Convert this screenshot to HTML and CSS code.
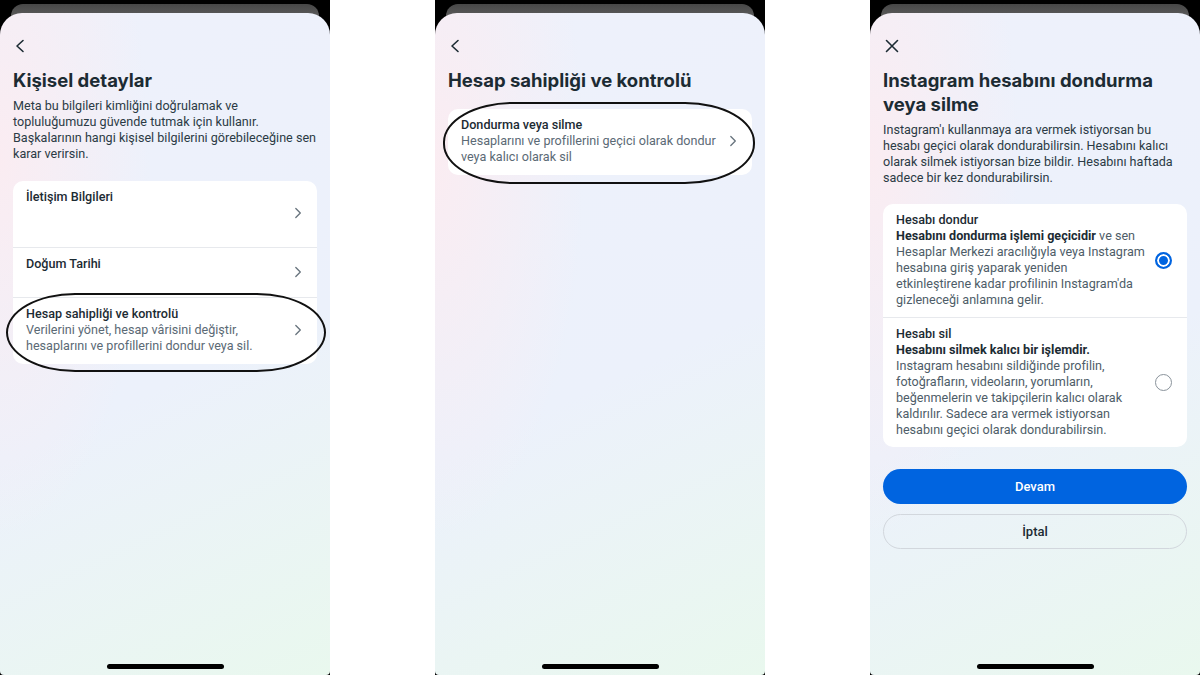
FILE: index.html
```html
<!DOCTYPE html>
<html lang="tr">
<head>
  <meta charset="UTF-8">
  <meta name="viewport" content="width=device-width, initial-scale=1.0">
  <title>Hesap dondurma adımları</title>
  <link rel="stylesheet" href="styles.css">
</head>
<body>

  <main class="strip">

    <section class="phone">
      <div class="peek"></div>
      <div class="sheet">
        <div class="nav">
          <svg class="nav-icon" viewBox="0 0 24 24"><path d="M10 6.5 4 12l6 5.5"/></svg>
        </div>
        <h1 class="title">Kişisel detaylar</h1>
        <p class="lead">Meta bu bilgileri kimliğini doğrulamak ve topluluğumuzu güvende tutmak için kullanır. Başkalarının hangi kişisel bilgilerini görebileceğine sen karar verirsin.</p>
        <div class="card">
          <div class="row row-tall">
            <div class="row-text">
              <div class="row-title">İletişim Bilgileri</div>
            </div>
            <svg class="chev" viewBox="0 0 16 16"><path d="M5.8 3.5 10.3 8l-4.5 4.5"/></svg>
          </div>
          <div class="row row-mid">
            <div class="row-text">
              <div class="row-title">Doğum Tarihi</div>
            </div>
            <svg class="chev" viewBox="0 0 16 16"><path d="M5.8 3.5 10.3 8l-4.5 4.5"/></svg>
          </div>
          <div class="row">
            <div class="row-text">
              <div class="row-title">Hesap sahipliği ve kontrolü</div>
              <div class="row-sub">Verilerini yönet, hesap vârisini değiştir, hesaplarını ve profillerini dondur veya sil.</div>
            </div>
            <svg class="chev" viewBox="0 0 16 16"><path d="M5.8 3.5 10.3 8l-4.5 4.5"/></svg>
            <span class="mark mark-one"></span>
          </div>
        </div>
        <div class="home-bar"></div>
      </div>
    </section>

    <section class="phone">
      <div class="peek"></div>
      <div class="sheet">
        <div class="nav">
          <svg class="nav-icon" viewBox="0 0 24 24"><path d="M10 6.5 4 12l6 5.5"/></svg>
        </div>
        <h1 class="title">Hesap sahipliği ve kontrolü</h1>
        <div class="card card-tight">
          <div class="row">
            <div class="row-text">
              <div class="row-title">Dondurma veya silme</div>
              <div class="row-sub">Hesaplarını ve profillerini geçici olarak dondur veya kalıcı olarak sil</div>
            </div>
            <svg class="chev" viewBox="0 0 16 16"><path d="M5.8 3.5 10.3 8l-4.5 4.5"/></svg>
            <span class="mark mark-two"></span>
          </div>
        </div>
        <div class="home-bar"></div>
      </div>
    </section>

    <section class="phone">
      <div class="peek"></div>
      <div class="sheet">
        <div class="nav">
          <svg class="nav-icon" viewBox="0 0 24 24"><path d="M3.5 6.5l11 11M14.5 6.5l-11 11"/></svg>
        </div>
        <h1 class="title">Instagram hesabını dondurma veya silme</h1>
        <p class="lead">Instagram'ı kullanmaya ara vermek istiyorsan bu hesabı geçici olarak dondurabilirsin. Hesabını kalıcı olarak silmek istiyorsan bize bildir. Hesabını haftada sadece bir kez dondurabilirsin.</p>
        <div class="card card-options">
          <label class="option">
            <div class="option-text">
              <div class="option-title">Hesabı dondur</div>
              <p><b>Hesabını dondurma işlemi geçicidir</b> ve sen Hesaplar Merkezi aracılığıyla veya Instagram hesabına giriş yaparak yeniden etkinleştirene kadar profilinin Instagram'da gizleneceği anlamına gelir.</p>
            </div>
            <span class="radio radio-on"></span>
          </label>
          <label class="option">
            <div class="option-text">
              <div class="option-title">Hesabı sil</div>
              <p><b>Hesabını silmek kalıcı bir işlemdir.</b> Instagram hesabını sildiğinde profilin, fotoğrafların, videoların, yorumların, beğenmelerin ve takipçilerin kalıcı olarak kaldırılır. Sadece ara vermek istiyorsan hesabını geçici olarak dondurabilirsin.</p>
            </div>
            <span class="radio"></span>
          </label>
        </div>
        <a class="btn btn-primary">Devam</a>
        <a class="btn btn-ghost">İptal</a>
        <div class="home-bar"></div>
      </div>
    </section>

  </main>

</body>
</html>
```

FILE: styles.css
```css
* {
  box-sizing: border-box;
}
body {
  margin: 0;
  background: #fff;
  color: #1c2b33;
  font-family: Roboto, "Noto Sans", sans-serif;
}
.strip {
  width: 1200px;
  height: 675px;
  display: flex;
  justify-content: space-between;
}
.phone {
  width: 330px;
  height: 675px;
  padding-top: 4px;
  background: #000;
  display: flex;
  flex-direction: column;
  overflow: hidden;
}
.peek {
  flex: none;
  height: 22px;
  margin: 0 11px;
  border-radius: 12px 12px 0 0;
  background: linear-gradient(#474747, #6b6b6b);
}
.sheet {
  flex: 1;
  margin-top: -13px;
  padding: 21px 13px 0;
  border-radius: 22px 22px 4px 4px;
  background:
    radial-gradient(ellipse 150px 380px at 0 22%, rgba(251, 236, 241, .95), rgba(251, 236, 241, 0)),
    linear-gradient(155deg, #eef1fb 0%, #ecf1fb 55%, #e9f8ee 100%);
  display: flex;
  flex-direction: column;
}
.nav {
  height: 24px;
  display: flex;
  align-items: center;
}
.nav-icon {
  width: 24px;
  height: 24px;
  fill: none;
  stroke: #1c2b33;
  stroke-width: 1.6;
  stroke-linecap: round;
  stroke-linejoin: round;
}
.title {
  margin: 10px 0 0;
  font-family: Inter, "Noto Sans", sans-serif;
  font-size: 18.5px;
  line-height: 24px;
  font-weight: 700;
}
.lead {
  margin: 6px 0 0;
  font-size: 12.6px;
  line-height: 16px;
  color: #2b3b45;
}
.card {
  margin-top: 19px;
  background: #fff;
  border-radius: 10px;
}
.card-tight {
  margin-top: 17px;
}
.row {
  position: relative;
  display: flex;
  align-items: center;
  gap: 8px;
  padding: 8px 11px 10px 13px;
  border-top: 1px solid #e7e9ed;
}
.row:first-child {
  border-top: 0;
}
.row-tall {
  min-height: 66px;
}
.row-mid {
  min-height: 50px;
}
.row-text {
  flex: 1;
  align-self: flex-start;
  font-size: 12.6px;
  line-height: 16px;
}
.row-title {
  font-weight: 500;
}
.row-sub {
  color: #5b6a75;
}
.chev {
  flex: none;
  width: 16px;
  height: 16px;
  fill: none;
  stroke: #67737d;
  stroke-width: 1.3;
  stroke-linecap: round;
  stroke-linejoin: round;
}
.mark {
  position: absolute;
  border: 2px solid #111;
  border-bottom-width: 2.5px;
  border-radius: 70px / 40px;
  pointer-events: none;
}
.mark-one {
  left: -7px;
  right: -9px;
  top: -5px;
  bottom: -8px;
}
.mark-two {
  left: -5px;
  right: -3px;
  top: -7px;
  bottom: -9px;
}
.card-options {
  margin-top: 18px;
}
.option {
  display: flex;
  align-items: center;
  gap: 10px;
  padding: 8px 15px 9px 13px;
  border-top: 1px solid #e7e9ed;
}
.option:first-child {
  border-top: 0;
}
.option-text {
  flex: 1;
  font-size: 12.6px;
  line-height: 16px;
}
.option-title {
  font-weight: 500;
}
.option-text p {
  margin: 0;
  color: #4e5d68;
}
.option-text b {
  color: #1c2b33;
  font-weight: 700;
}
.radio {
  flex: none;
  width: 17px;
  height: 17px;
  border-radius: 50%;
  border: 1.5px solid #8a939b;
}
.radio-on {
  border: 2px solid #0064e0;
  background: #0064e0;
  box-shadow: inset 0 0 0 2px #fff;
}
.btn {
  display: flex;
  align-items: center;
  justify-content: center;
  height: 35px;
  border-radius: 18px;
  font-size: 13px;
  font-weight: 500;
  cursor: pointer;
}
.btn-primary {
  margin-top: 22px;
  background: #0064e0;
  color: #fff;
}
.btn-ghost {
  margin-top: 10px;
  border: 1px solid #d2d7dd;
  color: #1c2b33;
}
.home-bar {
  flex: none;
  width: 117px;
  height: 5px;
  margin: auto auto 6px;
  border-radius: 3px;
  background: #000;
}
```
